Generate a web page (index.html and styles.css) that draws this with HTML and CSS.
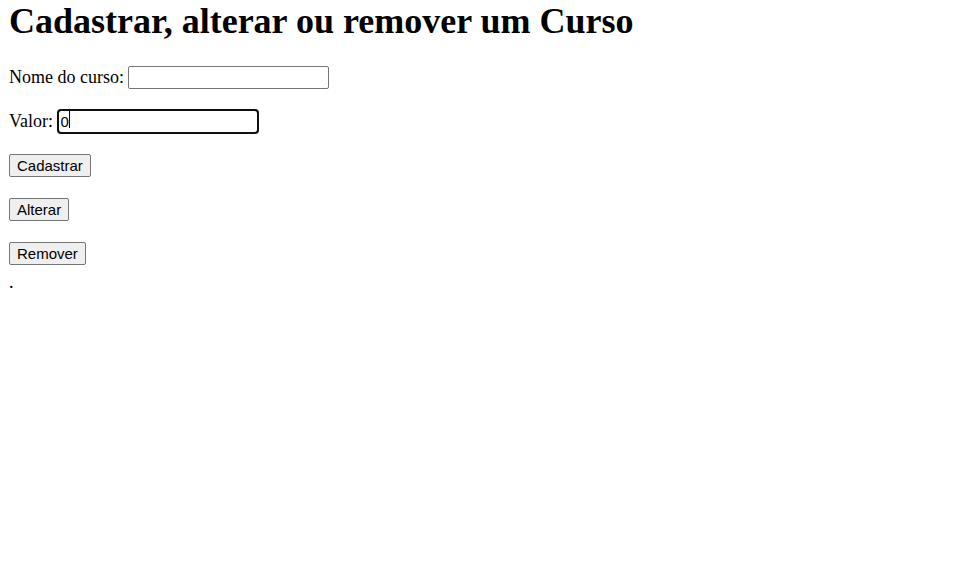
FILE: index.html
```html
<!DOCTYPE html>
<html lang="pt-BR">
<head>
<meta charset="utf-8">
<title>Cursos</title>
<link rel="stylesheet" href="styles.css">
</head>
<body class="page">
<h1 class="title">Cadastrar, alterar ou remover um Curso</h1>
<p class="row">Nome do curso: <input class="field field-name" type="text"></p>
<p class="row">Valor: <span class="caret-wrap"><input class="field field-value focused" type="text" value="0"><span class="caret"></span></span></p>
<p class="row"><button class="btn" type="button">Cadastrar</button></p>
<p class="row"><button class="btn" type="button">Alterar</button></p>
<p class="row"><button class="btn" type="button">Remover</button><br><span class="msg">.</span></p>
</body>
</html>
```
FILE: styles.css
```css
.page {
  margin: 0 9px;
  font-family: "Liberation Serif", "Times New Roman", serif;
  font-size: 18px;
  color: #000;
  background: #fff;
}
.title {
  font-size: 36px;
  font-weight: bold;
  margin: 0 0 22px;
}
.row {
  margin: 18px 0;
  line-height: 26px;
}
.field {
  font-family: "Liberation Sans", Arial, sans-serif;
  font-size: 15px;
  height: 23px;
  box-sizing: border-box;
  padding: 1px 2px;
  border: 1px solid #767676;
  border-radius: 2px;
  color: #000;
  background: #fff;
  vertical-align: baseline;
}
.field-name {
  width: 201px;
}
.field-value {
  width: 200px;
}
.focused,
.focused:focus {
  outline: 2px solid #101010;
  outline-offset: -1px;
  border-radius: 3px;
}
.caret-wrap {
  position: relative;
  display: inline-block;
}
.caret {
  position: absolute;
  left: 11px;
  top: 3px;
  width: 1px;
  height: 17px;
  background: #000;
}
.btn {
  font-family: "Liberation Sans", Arial, sans-serif;
  font-size: 15px;
  height: 23px;
  padding: 1px 7px;
  background: #efefef;
  border: 1px solid #767676;
  border-radius: 2px;
  color: #000;
}
.msg {
  vertical-align: -3px;
}
```
